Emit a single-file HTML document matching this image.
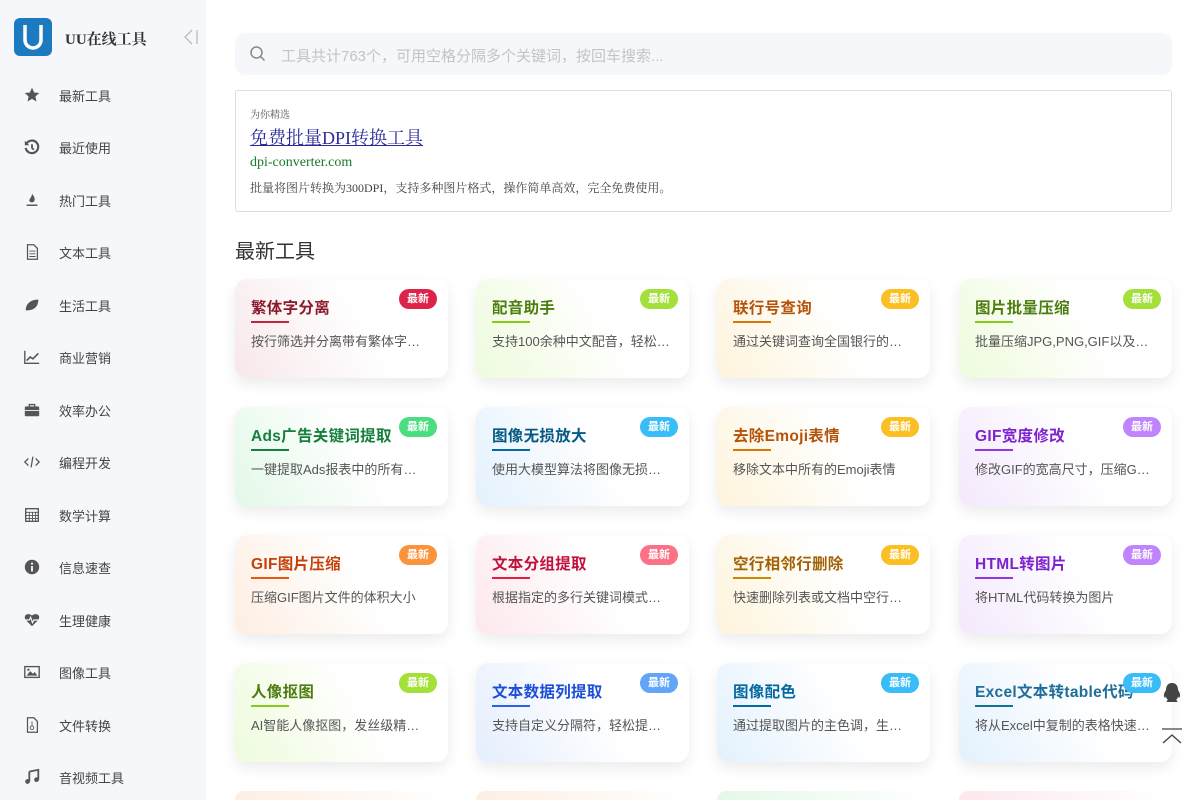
<!DOCTYPE html>
<html style="height:800px;overflow:hidden"><head><meta charset="utf-8"><style>
*{box-sizing:border-box;margin:0;padding:0}
html,body{width:1200px;height:800px;overflow:hidden}
body{background:#fff;font-family:"Liberation Sans","Noto Sans CJK SC",sans-serif;position:relative}
.wrap{position:absolute;left:0;top:0;width:1200px;height:800px;overflow:hidden}
.side{position:absolute;left:0;top:0;width:206px;height:800px;background:#f5f7fb}
.logo{position:absolute;left:14px;top:18px;width:38px;height:38px;background:#1c7ac0;border-radius:6px}
.brand{position:absolute;left:65px;top:28px;font-size:15px;font-weight:bold;color:#333;font-family:"Liberation Serif","Noto Serif CJK SC",serif}
.mi{position:absolute;left:0;width:206px;height:20px;font-size:13px;color:#444}
.mi svg{position:absolute;left:23px;top:1px;width:18px;height:18px}
.mi span{position:absolute;left:59px;top:1px}
.search{position:absolute;left:235px;top:33px;width:937px;height:42px;background:#f5f7fa;border-radius:10px}
.search svg{position:absolute;left:14px;top:12px}
.search span{position:absolute;left:46px;top:12px;font-size:15px;color:#c4c4c4}
.ad{position:absolute;left:235px;top:90px;width:937px;height:122px;border:1px solid #ddd;border-radius:3px;font-family:"Liberation Serif","Noto Serif CJK SC",serif}
.ad .t1{position:absolute;left:14px;top:15px;font-size:10px;color:#555}
.ad .t2{position:absolute;left:14px;top:33px;font-size:18px;color:#2a2a9a;text-decoration:underline}
.ad .t3{position:absolute;left:14px;top:64px;font-size:14px;color:#1a7a2a}
.ad .t4{position:absolute;left:14px;top:88px;font-size:12px;color:#444}
h2{position:absolute;left:235px;top:235px;font-size:20px;font-weight:normal;color:#333}
.card{position:absolute;width:213px;height:99px;border-radius:12px;box-shadow:0 6px 14px rgba(0,0,0,.08);overflow:hidden}
.card b{position:absolute;left:16px;top:17px;font-size:15.5px;white-space:nowrap;letter-spacing:.3px}
.card i{position:absolute;left:16px;top:42px;width:38px;height:2px}
.card p{position:absolute;left:16px;top:52px;font-size:13px;color:#555;white-space:nowrap}
.card em{position:absolute;right:11px;top:10px;width:38px;height:20px;border-radius:10px;color:#fff;font-style:normal;font-size:11px;text-align:center;line-height:20px;font-weight:bold}
.last{height:9px;border-radius:12px 12px 0 0;box-shadow:none}
</style></head><body><div class="wrap">
<div class="side">
<div class="logo"><svg width="38" height="38" viewBox="0 0 38 38"><path d="M11 7v15a8 8 0 0 0 16 0V7" fill="none" stroke="#fff" stroke-width="3.5"/></svg></div><div class="brand">UU在线工具</div>
<svg style="position:absolute;left:183px;top:28px" width="16" height="18" viewBox="0 0 16 18"><path d="M9 2L2 9l7 7" fill="none" stroke="#bbb" stroke-width="1.3"/><path d="M14 2v14" stroke="#bbb" stroke-width="1.3"/></svg>
<div class="mi" style="top:85px"><svg viewBox="0 0 20 20"><path d="M10 2l2.4 5.2 5.6.6-4.2 3.8 1.2 5.6L10 14.3 5 17.2l1.2-5.6L2 7.8l5.6-.6z" fill="#555"/></svg><span>最新工具</span></div>
<div class="mi" style="top:137px"><svg viewBox="0 0 20 20"><path d="M4 6a7 7 0 1 1-1 5" fill="none" stroke="#555" stroke-width="2.4"/><path d="M2 3v5h5z" fill="#555"/><path d="M10 7v4l2 2" stroke="#555" stroke-width="2" fill="none"/></svg><span>最近使用</span></div>
<div class="mi" style="top:190px"><svg viewBox="0 0 20 20"><path d="M10 3c3 4 4 6 2 9-1 1-4 1-5-1 0-3 3-4 3-8z" fill="#555"/><rect x="4" y="15" width="12" height="1.6" fill="#555"/></svg><span>热门工具</span></div>
<div class="mi" style="top:242px"><svg viewBox="0 0 20 20"><path d="M5 2h7l4 4v12H5z" fill="none" stroke="#555" stroke-width="1.4"/><path d="M7 9h7M7 12h7M7 15h7" stroke="#555"/></svg><span>文本工具</span></div>
<div class="mi" style="top:295px"><svg viewBox="0 0 20 20"><path d="M3 16C3 8 9 4 17 4c0 8-5 12-13 12z" fill="#555"/></svg><span>生活工具</span></div>
<div class="mi" style="top:347px"><svg viewBox="0 0 20 20"><path d="M2 3v14h16" fill="none" stroke="#555" stroke-width="1.5"/><path d="M4 14l4-4 3 2 6-6" fill="none" stroke="#555" stroke-width="1.8"/></svg><span>商业营销</span></div>
<div class="mi" style="top:400px"><svg viewBox="0 0 20 20"><rect x="2" y="6" width="16" height="11" rx="1.5" fill="#555"/><path d="M7 6V4h6v2" fill="none" stroke="#555" stroke-width="1.5"/><rect x="2" y="10" width="16" height="1" fill="#f5f7fb"/></svg><span>效率办公</span></div>
<div class="mi" style="top:452px"><svg viewBox="0 0 20 20"><path d="M6 6l-4 4 4 4M14 6l4 4-4 4M11 4l-2 12" fill="none" stroke="#555" stroke-width="1.4"/></svg><span>编程开发</span></div>
<div class="mi" style="top:505px"><svg viewBox="0 0 20 20"><rect x="3" y="3" width="14" height="14" fill="none" stroke="#555" stroke-width="1.5"/><path d="M3 7h14M3 10.5h14M3 14h14M7 7v10M10.5 7v10M14 7v10" stroke="#555"/></svg><span>数学计算</span></div>
<div class="mi" style="top:557px"><svg viewBox="0 0 20 20"><circle cx="10" cy="10" r="8" fill="#555"/><rect x="9" y="9" width="2" height="6" fill="#fff"/><circle cx="10" cy="6.3" r="1.2" fill="#fff"/></svg><span>信息速查</span></div>
<div class="mi" style="top:610px"><svg viewBox="0 0 20 20"><path d="M10 17L3 10C0 6 4 1 10 5c6-4 10 1 7 5z" fill="#555"/><path d="M2 10h5l1.5-3 2 6 1.5-3h6" fill="none" stroke="#f5f7fb" stroke-width="1.3"/></svg><span>生理健康</span></div>
<div class="mi" style="top:662px"><svg viewBox="0 0 20 20"><rect x="2" y="4" width="16" height="12" fill="none" stroke="#555" stroke-width="1.5"/><path d="M4 14l4-5 3 3 2-2 3 4z" fill="#555"/><circle cx="6" cy="7.5" r="1.3" fill="#555"/></svg><span>图像工具</span></div>
<div class="mi" style="top:715px"><svg viewBox="0 0 20 20"><path d="M5 2h7l4 4v12H5z" fill="none" stroke="#555" stroke-width="1.4"/><circle cx="10" cy="13" r="2" fill="none" stroke="#555"/><path d="M10 6v5" stroke="#555"/></svg><span>文件转换</span></div>
<div class="mi" style="top:767px"><svg viewBox="0 0 20 20"><path d="M7 4l10-2v11" fill="none" stroke="#555" stroke-width="2"/><path d="M7 4v11" stroke="#555" stroke-width="2"/><circle cx="5" cy="15" r="2.6" fill="#555"/><circle cx="15" cy="13" r="2.6" fill="#555"/></svg><span>音视频工具</span></div>
</div>
<div class="search"><svg width="18" height="18" viewBox="0 0 18 18"><circle cx="7.5" cy="7.5" r="5.5" fill="none" stroke="#888" stroke-width="1.5"/><path d="M11.5 11.5l4 4" stroke="#888" stroke-width="1.5"/></svg><span>工具共计763个，可用空格分隔多个关键词，按回车搜索...</span></div>
<div class="ad"><div class="t1">为你精选</div><div class="t2">免费批量DPI转换工具</div><div class="t3">dpi-converter.com</div><div class="t4">批量将图片转换为300DPI，支持多种图片格式，操作简单高效，完全免费使用。</div></div>
<h2>最新工具</h2>

<div class="card" style="left:235px;top:279px;background:linear-gradient(60deg,#f7e8ea,#fff 60%)"><b style="color:#8b1a2b">繁体字分离</b><i style="background:#c0263e"></i><p>按行筛选并分离带有繁体字…</p><em style="background:#dc2348">最新</em></div>
<div class="card" style="left:476px;top:279px;background:linear-gradient(60deg,#eefbdc,#fff 60%)"><b style="color:#4d7c0f">配音助手</b><i style="background:#84cc16"></i><p>支持100余种中文配音，轻松…</p><em style="background:#a3e03a">最新</em></div>
<div class="card" style="left:717px;top:279px;background:linear-gradient(60deg,#fef4dc,#fff 60%)"><b style="color:#b45309">联行号查询</b><i style="background:#d97706"></i><p>通过关键词查询全国银行的…</p><em style="background:#fbbf24">最新</em></div>
<div class="card" style="left:959px;top:279px;background:linear-gradient(60deg,#eefbdc,#fff 60%)"><b style="color:#4d7c0f">图片批量压缩</b><i style="background:#84cc16"></i><p>批量压缩JPG,PNG,GIF以及…</p><em style="background:#a3e03a">最新</em></div>

<div class="card" style="left:235px;top:407px;background:linear-gradient(60deg,#e3f8e8,#fff 60%)"><b style="color:#15803d">Ads广告关键词提取</b><i style="background:#15803d"></i><p>一键提取Ads报表中的所有…</p><em style="background:#4ade80">最新</em></div>
<div class="card" style="left:476px;top:407px;background:linear-gradient(60deg,#e3f1fd,#fff 60%)"><b style="color:#075985">图像无损放大</b><i style="background:#0369a1"></i><p>使用大模型算法将图像无损…</p><em style="background:#38bdf8">最新</em></div>
<div class="card" style="left:717px;top:407px;background:linear-gradient(60deg,#fef4dc,#fff 60%)"><b style="color:#b45309">去除Emoji表情</b><i style="background:#d97706"></i><p>移除文本中所有的Emoji表情</p><em style="background:#fbbf24">最新</em></div>
<div class="card" style="left:959px;top:407px;background:linear-gradient(60deg,#f3e8fc,#fff 60%)"><b style="color:#7e22ce">GIF宽度修改</b><i style="background:#9333ea"></i><p>修改GIF的宽高尺寸，压缩G…</p><em style="background:#c084fc">最新</em></div>

<div class="card" style="left:235px;top:535px;background:linear-gradient(60deg,#fdeee2,#fff 60%)"><b style="color:#c2410c">GIF图片压缩</b><i style="background:#ea580c"></i><p>压缩GIF图片文件的体积大小</p><em style="background:#fb923c">最新</em></div>
<div class="card" style="left:476px;top:535px;background:linear-gradient(60deg,#fde8ec,#fff 60%)"><b style="color:#be123c">文本分组提取</b><i style="background:#e11d48"></i><p>根据指定的多行关键词模式…</p><em style="background:#fb7185">最新</em></div>
<div class="card" style="left:717px;top:535px;background:linear-gradient(60deg,#fef4dc,#fff 60%)"><b style="color:#a16207">空行相邻行删除</b><i style="background:#ca8a04"></i><p>快速删除列表或文档中空行…</p><em style="background:#fbbf24">最新</em></div>
<div class="card" style="left:959px;top:535px;background:linear-gradient(60deg,#f3e8fc,#fff 60%)"><b style="color:#7e22ce">HTML转图片</b><i style="background:#9333ea"></i><p>将HTML代码转换为图片</p><em style="background:#c084fc">最新</em></div>

<div class="card" style="left:235px;top:663px;background:linear-gradient(60deg,#eefbdc,#fff 60%)"><b style="color:#4d7c0f">人像抠图</b><i style="background:#84cc16"></i><p>AI智能人像抠图，发丝级精…</p><em style="background:#a3e03a">最新</em></div>
<div class="card" style="left:476px;top:663px;background:linear-gradient(60deg,#e4eefd,#fff 60%)"><b style="color:#1d4ed8">文本数据列提取</b><i style="background:#2563eb"></i><p>支持自定义分隔符，轻松提…</p><em style="background:#60a5fa">最新</em></div>
<div class="card" style="left:717px;top:663px;background:linear-gradient(60deg,#e3f1fd,#fff 60%)"><b style="color:#0369a1">图像配色</b><i style="background:#0369a1"></i><p>通过提取图片的主色调，生…</p><em style="background:#38bdf8">最新</em></div>
<div class="card" style="left:959px;top:663px;background:linear-gradient(60deg,#e3f1fd,#fff 60%)"><b style="color:#1e6d9a">Excel文本转table代码</b><i style="background:#0e7490"></i><p>将从Excel中复制的表格快速…</p><em style="background:#38bdf8">最新</em></div>

<div class="card last" style="left:235px;top:791px;background:linear-gradient(90deg,#fdeee2,#fff)"></div>
<div class="card last" style="left:476px;top:791px;background:linear-gradient(90deg,#fdeee2,#fff)"></div>
<div class="card last" style="left:717px;top:791px;background:linear-gradient(90deg,#e3f8e8,#fff)"></div>
<div class="card last" style="left:959px;top:791px;background:linear-gradient(90deg,#fde8ec,#fff)"></div>

<svg style="position:absolute;left:1161px;top:682px" width="22" height="24" viewBox="0 0 22 24"><path d="M11 1c4 0 6 3 6 7 2 3 3 6 1 8 0 0-1-1-1-2 0 2-1 3-2 4 2 1 2 2 0 2H7c-2 0-2-1 0-2-1-1-2-2-2-4 0 1-1 2-1 2-2-2-1-5 1-8 0-4 2-7 6-7z" fill="#444"/></svg>
<svg style="position:absolute;left:1161px;top:728px" width="22" height="18" viewBox="0 0 22 18"><path d="M1 1h20" stroke="#444" stroke-width="1.2"/><path d="M2 15l9-8 9 8" fill="none" stroke="#444" stroke-width="1.4"/></svg>
</div></body></html>
